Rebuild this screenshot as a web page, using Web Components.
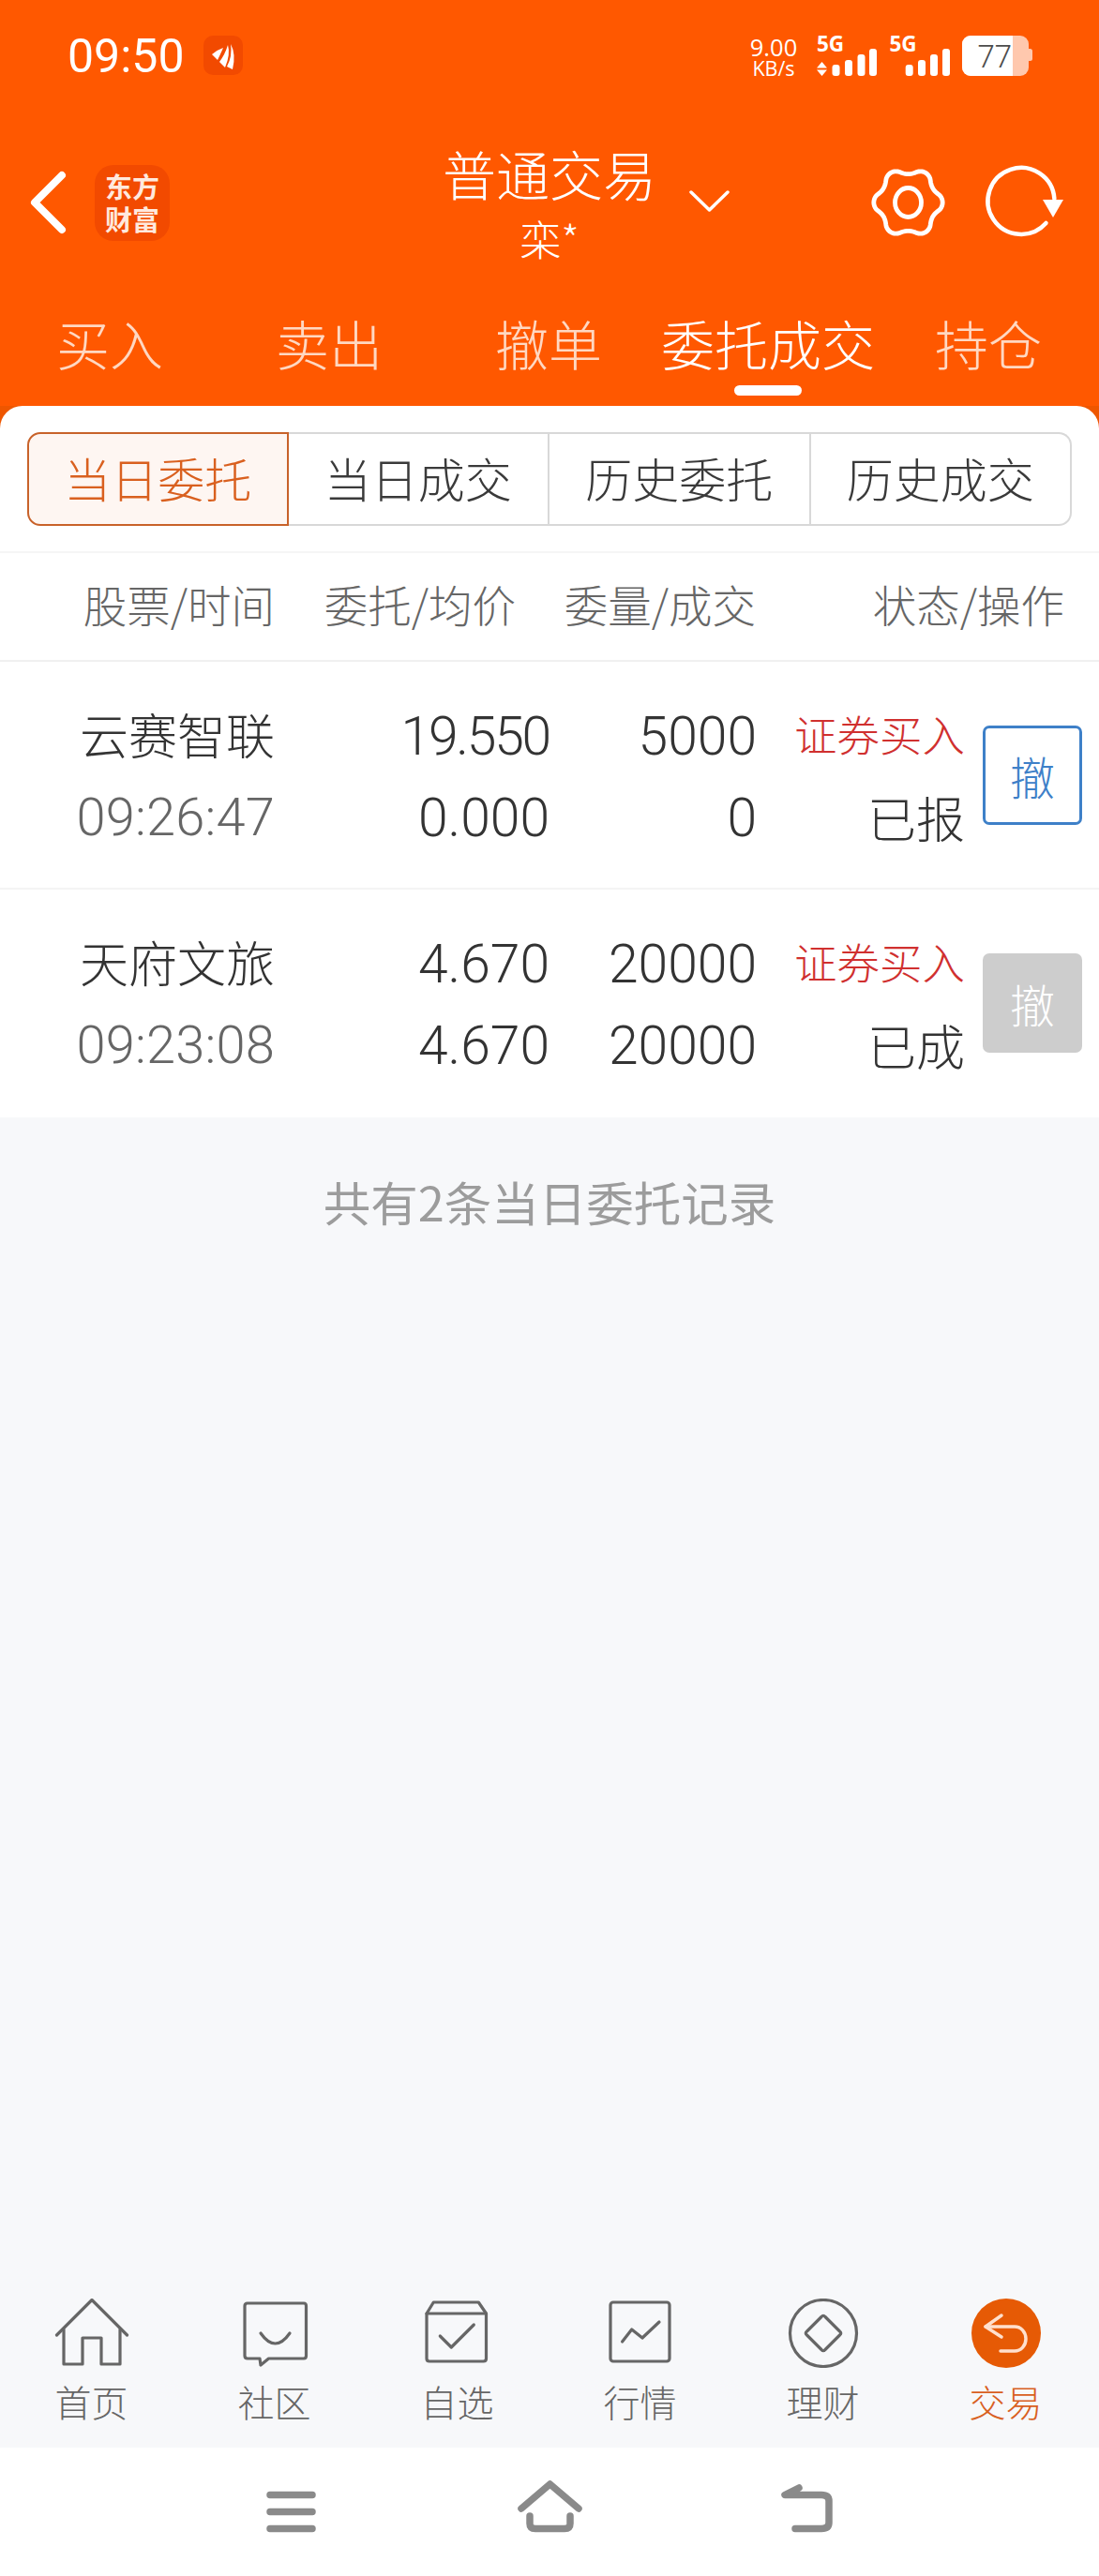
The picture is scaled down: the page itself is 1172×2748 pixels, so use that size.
<!DOCTYPE html>
<html lang="zh"><head><meta charset="utf-8">
<style>
html,body{margin:0;padding:0;background:#f7f8fa}
body{width:1172px;height:2748px;overflow:hidden;font-family:"Noto Sans CJK SC","Noto Sans",sans-serif;font-weight:300}
#app{display:flex;flex-direction:column;height:2748px}
</style></head><body>
<div id="app">
<app-header></app-header>
<segment-tabs></segment-tabs>
<table-head></table-head>
<order-row name="云赛智联" time="09:26:47" p1="19.550" p2="0.000" q1="5000" q2="0" st="已报" state="active"></order-row>
<order-row name="天府文旅" time="09:23:08" p1="4.670" p2="4.670" q1="20000" q2="20000" st="已成" state="done"></order-row>
<list-footer>共有2条当日委托记录</list-footer>
<bottom-tabs></bottom-tabs>
<nav-bar></nav-bar>
</div>
<script>
function def(name,html){customElements.define(name,class extends HTMLElement{constructor(){super();this.attachShadow({mode:'open'})}connectedCallback(){this.shadowRoot.innerHTML=typeof html==='function'?html(this):html}})}
const F='"Noto Sans CJK SC","Noto Sans",sans-serif';
function gear(){let p=[];for(let i=0;i<=120;i++){const t=i/120*Math.PI*2,c=Math.cos(6*t),r=33.5+3.2*Math.sign(c)*Math.pow(Math.abs(c),.8);p.push((39.5+r*Math.cos(t)).toFixed(1)+' '+(39+r*Math.sin(t)).toFixed(1))}return 'M'+p.join('L')+'Z'}
def('status-bar',`<style>
:host{display:flex;height:120px;box-sizing:border-box;padding:0 70px 0 72px;color:#fff}
.t{font:400 50px/1 Roboto,sans-serif;margin-top:35px;height:50px}
.app{margin:38px 0 0 20px;width:42px;height:42px}
.r{display:flex;margin-left:auto;padding-top:36px}
.sp2{display:flex;flex-direction:column;align-items:center;font-family:"Open Sans",sans-serif;font-weight:400;width:52px;padding-top:2px;white-space:nowrap}
.a{font-size:25.5px;line-height:25px}.b{font-size:21.5px;line-height:19px}
svg{display:block;overflow:visible}
</style><span class="t">09:50</span>
<svg class="app" viewBox="0 0 42 42"><rect width="42" height="42" rx="10" fill="#f24a00"/><g fill="#fff"><path d="M9 20Q15 15 21 13 18 20 15 26Z"/><path d="M17 28Q23 20 26 10 29 20 23 34Z"/><path d="M25 33Q31 22 29 9 35 20 31 36Z"/></g></svg>
<div class="r"><div class="sp2"><span class="a">9.00</span><span class="b">KB/s</span></div>
<svg width="232" height="48" viewBox="0 0 232 48" style="margin-left:19px"><g fill="#fff"><text x="1" y="19" font-family="Open Sans" font-weight="700" font-size="22.5">5G</text><text x="78.5" y="19" font-family="Open Sans" font-weight="700" font-size="22.5">5G</text>
<path d="M6.5 30 12 36.5H1ZM1 38.5H12L6.5 45Z"/>
<rect x="17.5" y="33" width="8" height="12" rx="3"/><rect x="31" y="28" width="8" height="17" rx="3"/><rect x="44.5" y="22" width="8" height="23" rx="3"/><rect x="57" y="16" width="8" height="29" rx="3"/>
<rect x="95.7" y="33" width="8" height="12" rx="3"/><rect x="109" y="28" width="8" height="17" rx="3"/><rect x="122" y="22" width="8" height="23" rx="3"/><rect x="135" y="16" width="8" height="29" rx="3"/>
<rect x="156" y="2" width="71" height="43" rx="9" fill="#ffc8ae"/><rect x="225" y="16" width="6" height="13" rx="2.5" fill="#ffc8ae"/>
<path d="M165 2H210V45H165a9 9 0 0 1-9-9V11a9 9 0 0 1 9-9Z"/></g>
<text x="172.5" y="36" font-family="Roboto" font-size="33" fill="#4c4c4c">77</text></svg></div>`);
def('app-header',()=>`<style>
:host{display:block;background:#ff5800;color:#fff;height:433px;position:relative}
.main{display:grid;grid-template-columns:1fr auto 1fr;grid-template-rows:192px;height:200px;align-items:center}
.left{display:flex;align-items:center;padding-left:33px}
svg{display:block;overflow:visible}
.logo{margin-left:30px;width:80px;height:81px;border-radius:20px;background:#f24a00;color:#ffe9de;display:flex;flex-direction:column;align-items:center;justify-content:center;font-weight:700;font-size:29px;line-height:35px;white-space:nowrap}
.title{align-self:start;margin-top:28px;text-align:center;font-size:57px;line-height:72px;white-space:nowrap}
.title small{display:block;font-size:44px;line-height:50px;margin-top:9px}
.right{display:flex;justify-content:flex-end;align-items:center;gap:43px;padding-right:37px}
.chev{position:absolute;left:735px;top:203px}
.tabs{display:grid;grid-template-columns:234px 234px 234px 234px 236px;text-align:center;font-size:57px;line-height:70px;height:113px;box-sizing:border-box;padding-top:10px;color:#ffd8c2;white-space:nowrap}
.tabs .on{color:#fff}
.tabs .on::after{content:"";display:block;width:72px;height:11px;border-radius:6px;background:#fff;margin:11px auto 0}
</style><status-bar></status-bar>
<div class="main"><div class="left"><svg width="38" height="66" viewBox="0 0 38 66" fill="none" stroke="#fff" stroke-width="8" stroke-linecap="round" stroke-linejoin="round"><path d="M33 4 4 33 33 62"/></svg>
<span class="logo"><span>东方</span><span>财富</span></span></div>
<div class="title">普通交易<small>栾*</small></div>
<div class="right"><svg width="79" height="78" viewBox="0 0 79 78" fill="none" stroke="#fff" stroke-width="4.8" stroke-linejoin="round"><path d="${gear()}"/><ellipse cx="39.5" cy="39" rx="14" ry="15.5"/></svg>
<svg width="84" height="76" viewBox="0 0 84 76" fill="none"><path d="M64.5 60A35.5 35.5 0 1 1 73.4 34" stroke="#fff" stroke-width="4.5" stroke-linecap="round"/><path d="M61 35H83L72 54Z" fill="#fff"/></svg></div></div>
<svg class="chev" width="43" height="23" viewBox="0 0 43 23" fill="none" stroke="#fff" stroke-width="3.5" stroke-linecap="round" stroke-linejoin="round"><path d="M2 2 21.5 21 41 2"/></svg>
<div class="tabs"><span>买入</span><span>卖出</span><span>撤单</span><span class="on">委托成交</span><span>持仓</span></div>`);
def('segment-tabs',`<style>
:host{display:block;background:#ee5600;height:157px}
.card{background:#fff;border-radius:24px 24px 0 0;height:157px;box-sizing:border-box;padding:28px 29px 0;border-bottom:2px solid #f5f5f5}
.w{display:grid;grid-template-columns:repeat(4,1fr);height:100px;font-size:50px;color:#3a3a3a;text-align:center;line-height:92px}
.w span{border:2px solid #d8d8d8;border-left:0;box-sizing:border-box;white-space:nowrap}
.w .on{border:2px solid #c8622a;background:#fef6f2;color:#d9601f;border-radius:14px 0 0 14px}
.w .l{border-radius:0 14px 14px 0}
</style><div class="card"><div class="w"><span class="on">当日委托</span><span>当日成交</span><span>历史委托</span><span class="l">历史成交</span></div></div>`);
def('table-head',`<style>
:host{display:block;background:#fff;height:116px;box-sizing:border-box;border-bottom:2px solid #f0f0f0;font-size:46.5px;color:#666}
.r{display:grid;grid-template-columns:293px 257px 256px 329px;height:114px;line-height:108px}
span{display:block;text-align:right;white-space:nowrap}
</style><div class="r"><span>股票/时间</span><span>委托/均价</span><span>委量/成交</span><span>状态/操作</span></div>`);
def('order-row',h=>{const g=k=>h.getAttribute(k);const act=g('state')==='active';const p1=g('p1');return `<style>
:host{display:block;background:#fff;height:243px;box-sizing:border-box;${act?'border-bottom:2px solid #f4f4f4;':''}}
.r{display:grid;grid-template-columns:293px 293px 221px 222px 1fr;height:241px;align-items:center}
.c{display:flex;flex-direction:column;text-align:right;font-size:57px;line-height:87px;color:#333;white-space:nowrap;padding-top:4px}
.n{font:300 52px/81px ${F};color:#333;padding-bottom:6px}
.n2{font:300 52px/85px ${F};color:#333;padding-bottom:2px}
.num{font-family:Roboto,sans-serif;font-weight:300}
.tm{color:#666;font-size:56px;letter-spacing:.2px}
.st{font-size:45.5px;line-height:81px;padding-bottom:6px;color:#d0302f}
.btn{width:106px;height:106px;margin-left:19px;box-sizing:border-box;border-radius:7px;display:flex;align-items:center;justify-content:center;font-size:48px;${act?'border:3.5px solid #3e80c8;color:#3e80c8;':'background:#cdcdcd;color:#fff;'}}
</style><div class="r"><div class="c"><span class="n">${g('name')}</span><span class="num tm">${g('time')}</span></div>
<div class="c num"><span style="${p1.length>5?'letter-spacing:-2.2px':''}">${p1}</span><span>${g('p2')}</span></div>
<div class="c num"><span>${g('q1')}</span><span>${g('q2')}</span></div>
<div class="c"><span class="st">证券买入</span><span class="n2">${g('st')}</span></div>
<div class="btn">撤</div></div>`});
def('list-footer',`<style>
:host{display:block;flex:1;background:#f7f8fa;text-align:center;color:#9c9c9c;font-size:50.5px;font-weight:400;line-height:60px;padding-top:59px;min-height:0}
</style><slot></slot>`);
const ic={
home:'<path d="M2.5 39 40 1.5 77.5 39"/><path d="M10 33V70H30V42H50V70H70V33"/>',
chat:'<path d="M11 5H71Q73.5 5 73.5 8V61Q73.5 64 71 64H33.5L25 71 24 64H11Q8 64 8 61V8Q8 5 11 5Z"/><path d="M25 37Q40.5 59 56 37"/>',
box:'<path d="M7 16 14.3 4H62.3L70.5 16V64Q70.5 67 67.5 67H10Q7 67 7 64Z"/><path d="M7 16H70.5"/><path d="M21.3 40 33.3 52 57.3 28"/>',
chart:'<rect x="8" y="4" width="63" height="63" rx="3"/><path d="M20.6 46 30.7 33 42 42 60 25"/>',
fin:'<circle cx="40" cy="37" r="35.5"/><path d="M38 19.5Q40 17 42 19.5L57.5 35Q60 37 57.5 39L42 54.5Q40 57 38 54.5L22.5 39Q20 37 22.5 35Z"/>'
};
def('tab-item',h=>{const on=h.hasAttribute('on');return `<style>
:host{display:flex;flex-direction:column;align-items:center;color:${on?'#d9601f':'#666'};font-size:39px;line-height:48px;width:195px;flex:none}
svg{display:block}
span{display:block;margin-top:11px;white-space:nowrap}
</style><svg width="80" height="74" viewBox="0 0 80 74" fill="none" stroke-linecap="round" stroke-linejoin="round">${on?`<circle cx="40" cy="37" r="37" fill="#e65a05"/><g stroke="#ffe0cd" stroke-width="3.5"><path d="M35 18 18 30 35 41" /><path d="M18 30H49C56 30 61 36 61 43 61 50 56 56 49 56H34"/></g>`:`<g stroke="#666" stroke-width="3.2">${ic[h.getAttribute('i')]}</g>`}</svg><span>${h.getAttribute('t')}</span>`});
def('bottom-tabs',`<style>
:host{display:flex;background:#f7f8fa;height:175px;box-sizing:border-box;padding-top:16px}
</style><tab-item i="home" t="首页"></tab-item><tab-item i="chat" t="社区"></tab-item><tab-item i="box" t="自选"></tab-item><tab-item i="chart" t="行情"></tab-item><tab-item i="fin" t="理财"></tab-item><tab-item on i="x" t="交易"></tab-item>`);
def('nav-bar',`<style>
:host{display:flex;background:#fff;height:137px;box-sizing:border-box;padding-left:284px}
svg{display:block}
</style><svg width="620" height="137" viewBox="284 2611 620 137" fill="none" stroke="#8a8a8a" stroke-width="7.5" stroke-linecap="round" stroke-linejoin="round"><path d="M288 2661.5H333M288 2679.5H333M288 2697.5H333"/><path d="M556 2676 586.5 2650 617 2676"/><path d="M565 2684V2692Q565 2697.5 571 2697.5H602Q608 2697.5 608 2692V2684"/><path d="M852 2654 837 2661.5H876Q884 2661.5 884 2668V2691Q884 2697.5 876 2697.5H848"/></svg>`);
</script></body></html>
